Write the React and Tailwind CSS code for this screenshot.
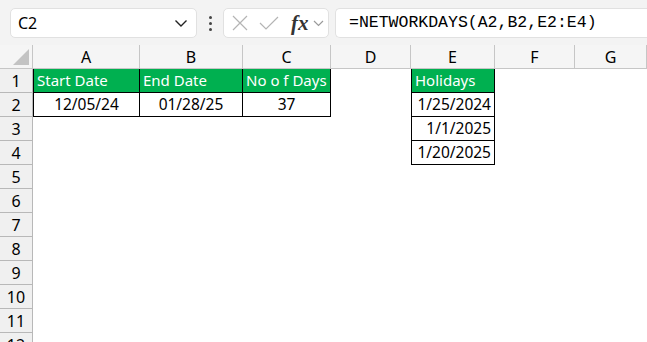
import React from "react";

const cols = [
  { name: "A", w: 107 },
  { name: "B", w: 103 },
  { name: "C", w: 88 },
  { name: "D", w: 80 },
  { name: "E", w: 84 },
  { name: "F", w: 80 },
  { name: "G", w: 72 },
];

// cell content for the sheet, keyed "A1" style
const cells = {
  A1: { v: "Start Date", head: true },
  B1: { v: "End Date", head: true },
  C1: { v: "No o f Days", head: true },
  A2: { v: "12/05/24", align: "center" },
  B2: { v: "01/28/25", align: "center" },
  C2: { v: "37", align: "center" },
  E1: { v: "Holidays", head: true },
  E2: { v: "1/25/2024", align: "right" },
  E3: { v: "1/1/2025", align: "right" },
  E4: { v: "1/20/2025", align: "right" },
};

function borderFor(col, row) {
  const inTable1 = ["A", "B", "C"].includes(col) && row <= 2;
  const inTable2 = col === "E" && row <= 4;
  if (!inTable1 && !inTable2) return "";
  let cls = "border-black border-r border-b";
  if (col === "A" || col === "E") cls += " border-l";
  return cls;
}

function Cell({ col, row }) {
  const c = cells[col + row];
  const b = borderFor(col, row);
  if (!c) return <div className={`h-[24px] bg-white ${b}`} />;
  if (c.head) {
    return (
      <div className={`h-[24px] bg-[#00b050] text-white flex items-center px-[3px] text-[15px] leading-none whitespace-nowrap overflow-hidden ${b}`}>
        {c.v}
      </div>
    );
  }
  const al = c.align === "right" ? "justify-end pr-[3px]" : "justify-center";
  return (
    <div className={`h-[24px] bg-white text-black flex items-center ${al} text-[15.5px] leading-none ${b}`}>
      {c.v}
    </div>
  );
}

export default function App() {
  const rows = Array.from({ length: 12 }, (_, i) => i + 1);
  return (
    <div className="w-[647px] h-[342px] overflow-hidden bg-white font-['Noto_Sans',Arial,sans-serif]">
      {/* formula bar */}
      <div className="h-[45px] bg-[#f3f3f3] flex items-start pt-[8px] pl-[10px]">
        <div className="w-[187px] h-[30px] bg-white border border-[#e1e1e1] rounded-[5px] flex items-center justify-between pl-[7px] pr-[8px]">
          <span className="text-[16px] text-black">C2</span>
          <svg width="14" height="9" viewBox="0 0 14 9">
            <path d="M1.5 1.5 L7 7 L12.5 1.5" fill="none" stroke="#222" strokeWidth="1.4" />
          </svg>
        </div>
        <div className="w-[26px] h-[30px] flex flex-col items-center justify-center gap-[3px]">
          <span className="w-[3px] h-[3px] bg-[#444] rounded-full" />
          <span className="w-[3px] h-[3px] bg-[#444] rounded-full" />
          <span className="w-[3px] h-[3px] bg-[#444] rounded-full" />
        </div>
        <div className="w-[106px] h-[30px] bg-white border border-[#e1e1e1] rounded-[5px] flex items-center pl-[8px]">
          <svg width="16" height="16" viewBox="0 0 16 16">
            <path d="M1 1 L15 15 M15 1 L1 15" stroke="#b4b4b4" strokeWidth="1.2" />
          </svg>
          <svg width="20" height="16" viewBox="0 0 20 16" className="ml-[11px]">
            <path d="M1 8 L7 14 L19 2" fill="none" stroke="#b4b4b4" strokeWidth="1.2" />
          </svg>
          <span className="font-['Liberation_Serif',serif] italic font-bold text-[21px] text-[#333] leading-none ml-[12px]">fx</span>
          <svg width="11" height="7" viewBox="0 0 11 7" className="ml-[4px]">
            <path d="M1 1 L5.5 5.5 L10 1" fill="none" stroke="#9a9a9a" strokeWidth="1.2" />
          </svg>
        </div>
        <div className="ml-[6px] flex-1 h-[30px] bg-white border border-[#e1e1e1] rounded-l-[5px] border-r-0 flex items-center pl-[13px]">
          <span className="font-['Liberation_Mono',monospace] text-[16.5px] text-black leading-none">
            =NETWORKDAYS(A2,B2,E2:E4)
          </span>
        </div>
      </div>

      {/* sheet */}
      <div className="grid grid-cols-[33px_107px_103px_88px_80px_84px_80px_72px]">
        <div className="h-[24px] bg-[#f5f5f5] border-r border-b border-[#c6c6c6] relative">
          <svg width="18" height="18" viewBox="0 0 18 18" className="absolute right-[2px] bottom-[2px]">
            <path d="M17 1 L17 17 L1 17 Z" fill="#c3c3c3" />
          </svg>
        </div>
        {cols.map((c) => (
          <div
            key={c.name}
            className="h-[24px] bg-[#f5f5f5] border-r border-b border-[#c6c6c6] flex items-center justify-center text-[16px] text-black"
          >
            {c.name}
          </div>
        ))}
        {rows.map((r) => (
          <React.Fragment key={r}>
            <div className="h-[24px] bg-[#f0f0f0] border-r border-b border-[#b8b8b8] flex items-center justify-center text-[16px] text-black">
              {r}
            </div>
            {cols.map((c) => (
              <Cell key={c.name} col={c.name} row={r} />
            ))}
          </React.Fragment>
        ))}
      </div>
    </div>
  );
}
